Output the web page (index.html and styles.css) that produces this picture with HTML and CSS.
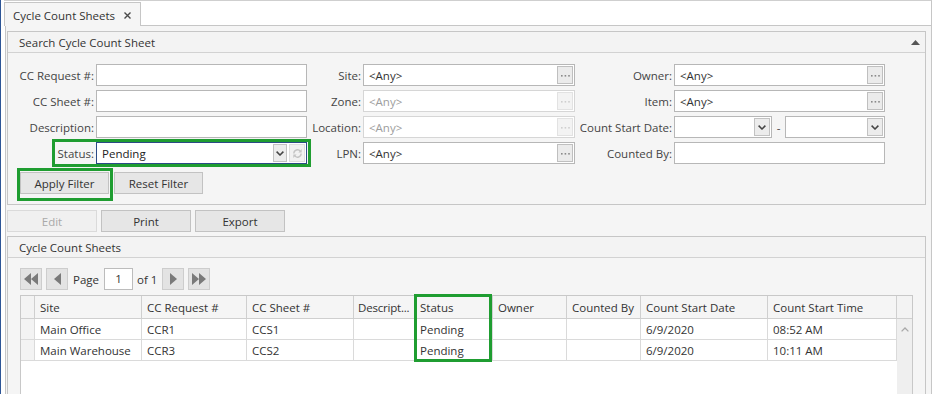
FILE: index.html
```html
<!DOCTYPE html>
<html lang="en">
<head>
<meta charset="utf-8">
<title>Cycle Count Sheets</title>
<link rel="stylesheet" href="styles.css">
</head>
<body>
<div class="app">
  <div class="tabstrip">
    <div class="tab">
      <span class="tab-title">Cycle Count Sheets</span>
      <svg class="tab-close" width="7" height="7" viewBox="0 0 7 7"><path d="M0.5 0.5L6.5 6.5M6.5 0.5L0.5 6.5" stroke="#4a4a4a" stroke-width="1.4"/></svg>
    </div>
  </div>
  <div class="tabbody">
    <section class="panel search">
      <header class="panel-h">
        <span>Search Cycle Count Sheet</span>
        <svg class="collapse" width="9" height="5" viewBox="0 0 9 5"><path d="M0 5L4.5 0L9 5Z" fill="#555"/></svg>
      </header>
      <div class="form">
        <label class="lbl">CC Request #:</label>
        <div class="field"></div>
        <label class="lbl">Site:</label>
        <div class="field"><span class="val">&lt;Any&gt;</span><span class="ell"><svg width="9" height="2" viewBox="0 0 9 2"><rect x="0" y="0" width="1.6" height="1.6" fill="#8a8a8a"/><rect x="3.6" y="0" width="1.6" height="1.6" fill="#8a8a8a"/><rect x="7.2" y="0" width="1.6" height="1.6" fill="#8a8a8a"/></svg></span></div>
        <label class="lbl">Owner:</label>
        <div class="field"><span class="val">&lt;Any&gt;</span><span class="ell"><svg width="9" height="2" viewBox="0 0 9 2"><rect x="0" y="0" width="1.6" height="1.6" fill="#8a8a8a"/><rect x="3.6" y="0" width="1.6" height="1.6" fill="#8a8a8a"/><rect x="7.2" y="0" width="1.6" height="1.6" fill="#8a8a8a"/></svg></span></div>

        <label class="lbl">CC Sheet #:</label>
        <div class="field"></div>
        <label class="lbl">Zone:</label>
        <div class="field disabled"><span class="val">&lt;Any&gt;</span><span class="ell"><svg width="9" height="2" viewBox="0 0 9 2"><rect x="0" y="0" width="1.6" height="1.6" fill="#cfcfcf"/><rect x="3.6" y="0" width="1.6" height="1.6" fill="#cfcfcf"/><rect x="7.2" y="0" width="1.6" height="1.6" fill="#cfcfcf"/></svg></span></div>
        <label class="lbl">Item:</label>
        <div class="field"><span class="val">&lt;Any&gt;</span><span class="ell"><svg width="9" height="2" viewBox="0 0 9 2"><rect x="0" y="0" width="1.6" height="1.6" fill="#8a8a8a"/><rect x="3.6" y="0" width="1.6" height="1.6" fill="#8a8a8a"/><rect x="7.2" y="0" width="1.6" height="1.6" fill="#8a8a8a"/></svg></span></div>

        <label class="lbl">Description:</label>
        <div class="field"></div>
        <label class="lbl">Location:</label>
        <div class="field disabled"><span class="val">&lt;Any&gt;</span><span class="ell"><svg width="9" height="2" viewBox="0 0 9 2"><rect x="0" y="0" width="1.6" height="1.6" fill="#cfcfcf"/><rect x="3.6" y="0" width="1.6" height="1.6" fill="#cfcfcf"/><rect x="7.2" y="0" width="1.6" height="1.6" fill="#cfcfcf"/></svg></span></div>
        <label class="lbl">Count Start Date:</label>
        <div class="range">
          <div class="field date"><span class="val"></span><span class="dd"><svg width="8" height="5" viewBox="0 0 8 5"><polyline points="0.6,0.6 4,4 7.4,0.6" fill="none" stroke="#444" stroke-width="1.5"/></svg></span></div>
          <span class="dash">-</span>
          <div class="field date2"><span class="val"></span><span class="dd"><svg width="8" height="5" viewBox="0 0 8 5"><polyline points="0.6,0.6 4,4 7.4,0.6" fill="none" stroke="#444" stroke-width="1.5"/></svg></span></div>
        </div>

        <label class="lbl">Status:</label>
        <div class="field focus"><span class="val strong">Pending</span><span class="dd"><svg width="8" height="5" viewBox="0 0 8 5"><polyline points="0.6,0.6 4,4 7.4,0.6" fill="none" stroke="#444" stroke-width="1.5"/></svg></span><span class="refresh"><svg width="11" height="11" viewBox="0 0 12 12"><path d="M2 6A4 4 0 0 1 9.2 3.6" fill="none" stroke="#c4c4c4" stroke-width="1.5"/><path d="M10.6 1.2V4.8H7Z" fill="#c4c4c4"/><path d="M10 6A4 4 0 0 1 2.8 8.4" fill="none" stroke="#c4c4c4" stroke-width="1.5"/><path d="M1.4 10.8V7.2H5Z" fill="#c4c4c4"/></svg></span></div>
        <label class="lbl">LPN:</label>
        <div class="field"><span class="val">&lt;Any&gt;</span><span class="ell"><svg width="9" height="2" viewBox="0 0 9 2"><rect x="0" y="0" width="1.6" height="1.6" fill="#8a8a8a"/><rect x="3.6" y="0" width="1.6" height="1.6" fill="#8a8a8a"/><rect x="7.2" y="0" width="1.6" height="1.6" fill="#8a8a8a"/></svg></span></div>
        <label class="lbl">Counted By:</label>
        <div class="field"></div>
      </div>
      <div class="filter-btns">
        <button class="btn">Apply Filter</button>
        <button class="btn">Reset Filter</button>
      </div>
      <div class="hl hl-status"></div>
      <div class="hl hl-apply"></div>
    </section>

    <div class="toolbar">
      <button class="btn tb" disabled>Edit</button>
      <button class="btn tb">Print</button>
      <button class="btn tb">Export</button>
    </div>

    <section class="panel results">
      <header class="panel-h"><span>Cycle Count Sheets</span></header>
      <div class="pager">
        <span class="pbtn"><svg width="14" height="12" viewBox="0 0 14 12"><path d="M7 0L0 6L7 12ZM14 0L7 6L14 12Z" fill="#7a7a7a"/></svg></span>
        <span class="pbtn"><svg width="7" height="12" viewBox="0 0 7 12"><path d="M7 0L0 6L7 12Z" fill="#7a7a7a"/></svg></span>
        <span class="ptext">Page</span>
        <span class="pinput">1</span>
        <span class="ptext of">of 1</span>
        <span class="pbtn"><svg width="7" height="12" viewBox="0 0 7 12"><path d="M0 0L7 6L0 12Z" fill="#7a7a7a"/></svg></span>
        <span class="pbtn"><svg width="14" height="12" viewBox="0 0 14 12"><path d="M0 0L7 6L0 12ZM7 0L14 6L7 12Z" fill="#7a7a7a"/></svg></span>
      </div>
      <div class="grid-wrap">
        <table class="grid">
          <colgroup>
            <col class="c-rh"><col class="c-site"><col class="c-req"><col class="c-sheet"><col class="c-desc"><col class="c-status"><col class="c-owner"><col class="c-by"><col class="c-date"><col class="c-time">
          </colgroup>
          <thead>
            <tr><th class="rh"></th><th>Site</th><th>CC Request #</th><th>CC Sheet #</th><th class="desc" title="Description">Descript...</th><th>Status</th><th>Owner</th><th>Counted By</th><th>Count Start Date</th><th>Count Start Time</th></tr>
          </thead>
          <tbody>
            <tr><td class="rh"></td><td>Main Office</td><td>CCR1</td><td>CCS1</td><td></td><td>Pending</td><td></td><td></td><td>6/9/2020</td><td>08:52 AM</td></tr>
            <tr><td class="rh"></td><td>Main Warehouse</td><td>CCR3</td><td>CCS2</td><td></td><td>Pending</td><td></td><td></td><td>6/9/2020</td><td>10:11 AM</td></tr>
          </tbody>
        </table>
        <div class="vscroll">
          <div class="vs-h"></div>
          <div class="vs-track"><svg width="8" height="5" viewBox="0 0 8 5"><polyline points="0.6,4.4 4,1 7.4,4.4" fill="none" stroke="#a9a9a9" stroke-width="1.3"/></svg></div>
        </div>
        <div class="hl hl-col"></div>
      </div>
    </section>
  </div>
</div>
</body>
</html>
```

FILE: styles.css
```css
* { box-sizing: border-box; }
html, body { margin: 0; height: 394px; overflow: hidden; }
body {
  font-family: "Open Sans", "Noto Sans", sans-serif;
  font-size: 11.5px;
  color: #333;
  background: #fff;
}
.app {
  border-left: 1px solid #2d5596;
  padding-left: 3px;
  height: 394px;
  overflow: hidden;
}
.tabstrip {
  display: flex;
  height: 26px;
  border-top: 1px solid #cfcfcf;
  border-bottom: 1px solid #c6c6c6;
  border-right: 1px solid #c6c6c6;
}
.tab {
  margin-top: 1px;
  height: 24px;
  width: 137px;
  border: 1px solid #c6c6c6;
  border-bottom: none;
  background: #f5f5f5;
  display: flex;
  align-items: center;
  padding: 1px 0 0 8px;
  color: #333;
}
.tab-close { margin-left: auto; margin-right: 9px; }

.tabbody {
  margin-left: 1px;
  border-left: 1px solid #c6c6c6;
  border-right: 1px solid #c6c6c6;
  background: #f5f5f5;
  padding: 5px 5px 0 1px;
  height: 368px;
  overflow: hidden;
}
.panel {
  border: 1px solid #c6c6c6;
  background: #f5f5f5;
  position: relative;
}
.panel-h {
  height: 21px;
  border-bottom: 1px solid #d2d2d2;
  display: flex;
  align-items: center;
  padding: 0 5px 0 11px;
  background: #f3f3f3;
  color: #333;
}
.collapse { margin-left: auto; }

.form {
  display: grid;
  grid-template-columns: 86px 211px 52px 212px 95px 211px;
  column-gap: 2px;
  row-gap: 4px;
  grid-auto-rows: 22px;
  padding-top: 11px;
}
.lbl {
  display: flex;
  align-items: center;
  justify-content: flex-end;
  white-space: nowrap;
  color: #444;
}
.field {
  border: 1px solid #b7b7b7;
  background: #fff;
  display: flex;
  align-items: center;
  padding: 1px;
  height: 22px;
}
.field.focus { border-color: #2b4a86; }
.field.disabled { border-color: #d6d6d6; color: #a0a0a0; }
.val {
  flex: 1;
  padding-left: 4px;
  white-space: nowrap;
  color: #333;
}
.field.disabled .val { color: #9d9d9d; }
.val.strong { color: #222; }
.ell {
  width: 16px;
  height: 18px;
  border: 1px solid #bfbfbf;
  background: #ebebeb;
  display: flex;
  align-items: center;
  justify-content: center;
  padding-top: 2px;
}
.field.disabled .ell { border-color: #e2e2e2; background: #f3f3f3; }
.dd {
  width: 14px;
  height: 18px;
  border: 1px solid #c2c2c2;
  background: #ececec;
  display: flex;
  align-items: center;
  justify-content: center;
}
.date .dd, .date2 .dd { width: 16px; }
.refresh {
  width: 16px;
  height: 18px;
  margin-left: 2px;
  border: 1px solid #dedede;
  background: #f1f1f1;
  display: flex;
  align-items: center;
  justify-content: center;
}
.range { display: flex; align-items: center; }
.range .date { width: 98px; }
.range .date2 { width: 100px; }
.dash { width: 13px; text-align: center; color: #444; }

.filter-btns {
  display: flex;
  gap: 5px;
  padding: 8px 0 10px 12px;
}
.btn {
  font: inherit;
  color: #333;
  background: #e6e6e6;
  border: 1px solid #c2c2c2;
  height: 22px;
  width: 89px;
  padding: 0;
}
.btn:disabled {
  color: #a9a9a9;
  background: #f0f0f0;
  border-color: #dadada;
}
.toolbar {
  display: flex;
  gap: 4px;
  padding-top: 5px;
}
.btn.tb { width: 90px; }

.results { margin-top: 4px; height: 162px; }
.pager {
  display: flex;
  align-items: center;
  padding: 10px 0 0 12px;
  height: 32px;
}
.pbtn {
  width: 22px;
  height: 22px;
  border: 1px solid #cdcdcd;
  background: #e3e3e3;
  display: flex;
  align-items: center;
  justify-content: center;
  margin-right: 4px;
}
.ptext { margin: 0 5px 0 1px; color: #333; }
.ptext.of { margin: 0 5px 0 4px; }
.pinput {
  width: 29px;
  height: 22px;
  border: 1px solid #bcbcbc;
  background: #fff;
  text-align: center;
  line-height: 20px;
}

.grid-wrap {
  margin: 5px 0 0 12px;
  width: 893px;
  height: 100px;
  border: 1px solid #c8c8c8;
  background: #fff;
  display: flex;
  position: relative;
}
.grid {
  width: 876px;
  table-layout: fixed;
  border-collapse: separate;
  border-spacing: 0;
  align-self: flex-start;
}
.c-rh { width: 14px; }
.c-site { width: 107px; }
.c-req { width: 105px; }
.c-sheet { width: 107px; }
.c-desc { width: 61px; }
.c-status { width: 78px; }
.c-owner { width: 74px; }
.c-by { width: 74px; }
.c-date { width: 127px; }
.c-time { width: 129px; }
.grid th, .grid td {
  border-right: 1px solid #dadada;
  border-bottom: 1px solid #dadada;
  padding: 0 2px 0 5px;
  text-align: left;
  font-weight: normal;
  white-space: nowrap;
  overflow: hidden;
  color: #333;
}
.grid th {
  height: 23px;
  background: #f5f5f5;
  border-color: #cfcfcf;
}
.grid th.desc { padding: 0 0 0 4px; letter-spacing: -0.2px; }
.grid td { height: 21px; }
.grid .rh { background: #f3f3f3; padding: 0; }
.vscroll {
  width: 15px;
  display: flex;
  flex-direction: column;
}
.vs-h {
  height: 23px;
  background: #f3f3f3;
  border-bottom: 1px solid #cfcfcf;
}
.vs-track {
  flex: 1;
  background: #efefef;
  display: flex;
  justify-content: center;
  padding-top: 8px;
}

.hl {
  position: absolute;
  border: 3px solid #1f9d31;
}
.hl-status { left: 44px; top: 107px; width: 259px; height: 28px; }
.hl-apply { left: 9px; top: 136px; width: 96px; height: 33px; }
.hl-col { left: 393px; top: -2px; width: 78px; height: 68px; }
```
